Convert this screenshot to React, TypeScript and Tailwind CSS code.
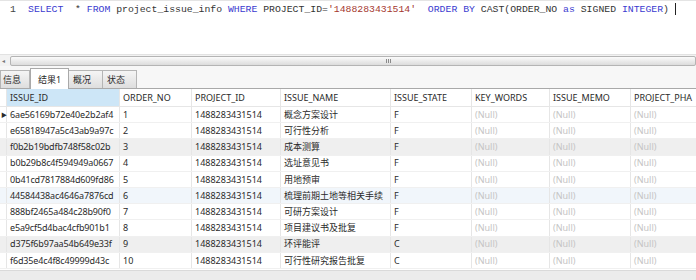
import React from "react";

const cols = [
  { key: "id", label: "ISSUE_ID", w: 113 },
  { key: "no", label: "ORDER_NO", w: 72 },
  { key: "pid", label: "PROJECT_ID", w: 89 },
  { key: "name", label: "ISSUE_NAME", w: 110 },
  { key: "state", label: "ISSUE_STATE", w: 81 },
  { key: "kw", label: "KEY_WORDS", w: 78 },
  { key: "memo", label: "ISSUE_MEMO", w: 81 },
  { key: "pha", label: "PROJECT_PHA", w: 80 },
];

const rows = [
  ["6ae56169b72e40e2b2af4", "1", "概念方案设计", "F"],
  ["e65818947a5c43ab9a97c", "2", "可行性分析", "F"],
  ["f0b2b19bdfb748f58c02b", "3", "成本测算", "F"],
  ["b0b29b8c4f594949a0667", "4", "选址意见书", "F"],
  ["0b41cd7817884d609fd86", "5", "用地预审", "F"],
  ["44584438ac4646a7876cd", "6", "梳理前期土地等相关手续", "F"],
  ["888bf2465a484c28b90f0", "7", "可研方案设计", "F"],
  ["e5a9cf5d4bac4cfb901b1", "8", "项目建议书及批复", "F"],
  ["d375f6b97aa54b649e33f", "9", "环评能评", "C"],
  ["f6d35e4c4f8c49999d43c", "10", "可行性研究报告批复", "C"],
];

const ui = { fontFamily: '"Noto Sans", "Noto Sans CJK SC", sans-serif' };

function Cell(props: { w: number; children: React.ReactNode; className?: string }) {
  return (
    <div
      className={"shrink-0 h-full overflow-hidden whitespace-nowrap pl-[3px] border-r border-[#e6e6e6] flex items-center " + (props.className || "")}
      style={{ width: props.w }}
    >
      {props.children}
    </div>
  );
}

export default function App() {
  return (
    <div className="w-[696px] h-[280px] overflow-hidden bg-white text-[#2a2a2a]" style={ui}>
      {/* editor */}
      <div className="h-[54px] border-t border-[#e4e4e4] flex items-start pt-[2px] font-['Liberation_Mono',monospace] text-[9.8px] leading-[13px]">
        <div className="w-[28px] pl-[10px] text-[#444]">1</div>
        <div className="whitespace-pre text-[#333]">
          <span className="text-[#3a3acf]">SELECT</span>{"  * "}
          <span className="text-[#3a3acf]">FROM</span>{" project_issue_info "}
          <span className="text-[#3a3acf]">WHERE</span>{" PROJECT_ID="}
          <span className="text-[#a5372f]">'1488283431514'</span>{"  "}
          <span className="text-[#3a3acf]">ORDER BY</span>{" CAST(ORDER_NO "}
          <span className="text-[#3a3acf]">as</span>{" SIGNED "}
          <span className="text-[#3a3acf]">INTEGER</span>{") "}
          <span className="inline-block w-px h-[12px] bg-[#222] align-middle" />
        </div>
      </div>

      {/* horizontal scrollbar */}
      <div className="h-[12px] flex items-center bg-[#f2f2f2] border-t border-[#e2e2e2]">
        <div className="w-[10px] text-[6px] text-[#777] pl-[2px] leading-none">◂</div>
        <div className="flex-1 h-[10px] rounded-[2px] border border-[#b4b4b4] bg-gradient-to-b from-[#fbfbfb] to-[#dcdcdc] flex items-center pl-[375px]">
          <div className="flex gap-[1px]">
            <div className="w-px h-[4px] bg-[#8a8a8a]" />
            <div className="w-px h-[4px] bg-[#8a8a8a]" />
            <div className="w-px h-[4px] bg-[#8a8a8a]" />
          </div>
        </div>
      </div>

      {/* tabs */}
      <div className="h-[23px] bg-[#f7f7f7] border-b border-[#a9a9a9] flex items-end text-[9px] leading-none">
        <div className="w-[30px] h-[18px] border border-b-0 border-[#b5b5b5] bg-gradient-to-b from-[#f5f5f5] to-[#dedede] flex items-center pl-[2px]">信息</div>
        <div className="w-[39px] h-[21px] border border-b-0 border-[#a9a9a9] bg-white -mb-px flex items-center justify-center">结果1</div>
        <div className="w-[34px] h-[18px] border border-b-0 border-l-0 border-[#b5b5b5] bg-gradient-to-b from-[#f5f5f5] to-[#dedede] flex items-center pl-[4px]">概况</div>
        <div className="w-[34px] h-[18px] border border-b-0 border-l-0 border-[#b5b5b5] bg-gradient-to-b from-[#f5f5f5] to-[#dedede] flex items-center pl-[4px]">状态</div>
      </div>

      {/* header */}
      <div className="h-[18px] flex text-[9px] border-b border-[#e6e6e6]">
        <div className="w-[7px] shrink-0 border-r border-[#e6e6e6]" />
        {cols.map((c, i) => (
          <Cell key={c.key} w={c.w} className={i === 0 ? "bg-[#cde6f7]" : ""}>
            {c.label}
          </Cell>
        ))}
      </div>

      {/* rows */}
      {rows.map((r, i) => {
        const bg = i === 2 || i === 8 ? "bg-[#efefef]" : i === 5 ? "bg-[#f1f6fb]" : "bg-white";
        return (
          <div key={i} className={"h-[16.2px] flex text-[9px] border-b border-[#f0f0f0] " + bg}>
            <div className="w-[7px] shrink-0 border-r border-[#e6e6e6] flex items-center text-[6px] leading-none pl-[1px]">
              {i === 0 ? "▶" : ""}
            </div>
            <Cell w={cols[0].w} className="tracking-[-0.15px]">{r[0]}</Cell>
            <Cell w={cols[1].w}>{r[1]}</Cell>
            <Cell w={cols[2].w}>1488283431514</Cell>
            <Cell w={cols[3].w}>{r[2]}</Cell>
            <Cell w={cols[4].w}>{r[3]}</Cell>
            <Cell w={cols[5].w} className="text-[#c4c4c4]">(Null)</Cell>
            <Cell w={cols[6].w} className="text-[#c4c4c4]">(Null)</Cell>
            <Cell w={cols[7].w} className="text-[#c4c4c4]">(Null)</Cell>
          </div>
        );
      })}

      {/* bottom scrollbar strip */}
      <div className="h-[12px] bg-[#ececec] border-t border-[#dadada] mt-[1px]" />
    </div>
  );
}
